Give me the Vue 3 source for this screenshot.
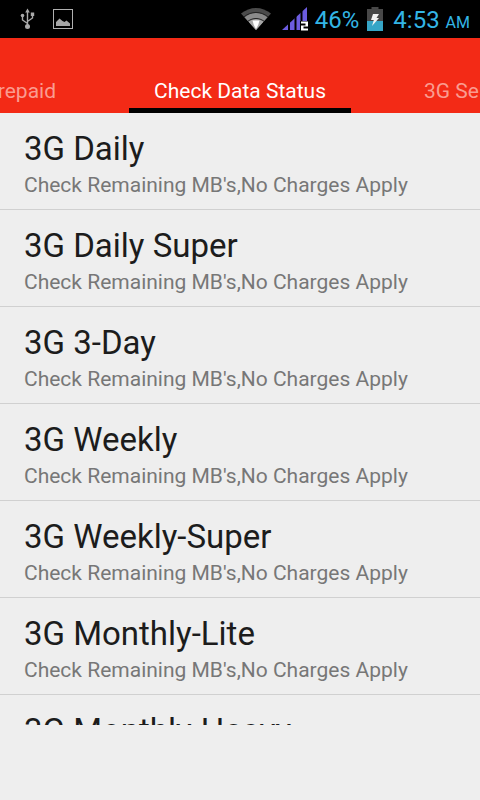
<script setup>
import { ref } from 'vue'

const plans = [
  '3G Daily',
  '3G Daily Super',
  '3G 3-Day',
  '3G Weekly',
  '3G Weekly-Super',
  '3G Monthly-Lite',
  '3G Monthly-Heavy'
]
const note = "Check Remaining MB's,No Charges Apply"
const tabs = ['Prepaid', 'Check Data Status', '3G Services']
const current = ref(1)
</script>

<template>
  <div class="screen">
    <header class="status">
      <div class="group notices">
        <svg class="usb" width="16" height="22" viewBox="0 0 16 22" aria-hidden="true">
          <g fill="none" stroke="#a9a9a9" stroke-width="1.4">
            <path d="M7.5 3v15M7.5 15.5L2.5 12V8M7.5 13.5l5-3.500V7" />
          </g>
          <g fill="#a9a9a9">
            <path d="M7.500 .5L9.800 4.500H5.200z" />
            <circle cx="7.500" cy="18.500" r="2.500" />
            <circle cx="2.500" cy="7.500" r="1.800" />
            <path d="M10.800 4.500h3.400v3.400h-3.400z" />
          </g>
        </svg>
        <svg width="20" height="20" viewBox="0 0 20 20" aria-hidden="true">
          <rect x=".5" y=".5" width="19" height="19" fill="none" stroke="#b0b0b0" />
          <path d="M3 17v-4l3.500-3.500L9.500 12l2 1 2-1.500 3.500 3V17z" fill="#a6a6a6" />
        </svg>
      </div>
      <div class="group system">
        <svg class="wifi" width="32" height="24" viewBox="0 0 32 24" aria-hidden="true">
          <path d="M16 23L1 6.500C10 -1 22 -1 31 6.500z" fill="#4b4b4b" />
          <path d="M16 23L4.500 10.300C11.500 4.500 20.500 4.500 27.500 10.300z" fill="#8a8a8a" />
          <path d="M16 23L8.500 14.600C13 11.300 19 11.300 23.500 14.600z" fill="#a8a8a8" />
          <g fill="none" stroke="#222" stroke-width="1">
            <path d="M4 9.800C11 4 21 4 28 9.800M8 14.200C13 10.600 19 10.600 24 14.200" />
          </g>
          <path d="M12.500 13.500h7l-1.300 4.500L16 22l-2.200-4z" fill="#fff" />
        </svg>
        <svg class="signal" width="27" height="24" viewBox="0 0 27 24" aria-hidden="true">
          <path d="M0 23L25 0v23z" fill="#6c5ce0" />
          <path d="M6 0h2v24H6zM12.500 0h2v24h-2zM18.500 0h2v24h-2z" fill="#000" />
          <path d="M18 14h8v10h-8z" fill="#000" />
          <path d="M19 14.500h7v5h-4.500v2H26v2h-7v-5h4.500v-2H19z" fill="#fff" />
        </svg>
        <span class="percent">46%</span>
        <svg class="battery" width="16" height="24" viewBox="0 0 16 24" aria-hidden="true">
          <path d="M4.500 0h7v2H16v22H0V2h4.500z" fill="#484848" />
          <path d="M0 14h16v10H0z" fill="#36a5c6" />
          <path d="M6 7h6l-2.500 4H12l-7 8 1.800-6H4z" fill="#f4f4f4" />
        </svg>
        <time class="clock">4:53 <small>AM</small></time>
      </div>
    </header>

    <nav class="tabs">
      <button
        v-for="(tab, i) in tabs"
        :key="tab"
        type="button"
        class="tab"
        :class="{ active: i === current }"
        @click="current = i"
      >{{ tab }}</button>
    </nav>

    <main class="list-area">
      <ul class="list">
        <li v-for="plan in plans" :key="plan">
          <a class="row" href="#">
            <span class="title">{{ plan }}</span>
            <span class="note">{{ note }}</span>
          </a>
        </li>
      </ul>
    </main>
    <footer class="spacer"></footer>
  </div>
</template>

<style>
body {
  background: #eeeeee;
}
</style>

<style scoped>
.screen {
  display: flex;
  flex-direction: column;
  height: 100vh;
  overflow: hidden;
  background: #eeeeee;
  font-family: Roboto, "Liberation Sans", sans-serif;
}
.status {
  display: flex;
  flex: none;
  justify-content: space-between;
  align-items: center;
  height: 38px;
  padding: 0 10px 0 20px;
  background: #000;
  color: #33b5e5;
}
.group {
  display: flex;
  align-items: center;
}
.notices {
  gap: 17px;
}
.system {
  white-space: nowrap;
}
.signal {
  margin-left: 10px;
}
.percent {
  margin-left: 6px;
  font-size: 24px;
  line-height: 24px;
  padding-top: 2px;
}
.battery {
  margin: 0 10px 0 8px;
}
.clock {
  font-size: 24px;
  line-height: 24px;
  padding-top: 2px;
}
.clock small {
  font-size: 16px;
  line-height: 16px;
}
.tabs {
  display: grid;
  flex: none;
  grid-template-columns: minmax(0, 1fr) auto minmax(0, 1fr);
  height: 75px;
  overflow: hidden;
  background: #f32a16;
}
.tab {
  display: flex;
  align-items: flex-end;
  justify-content: flex-start;
  min-width: 0;
  padding: 0 0 4px 73px;
  border: 0;
  border-bottom: 5px solid transparent;
  background: none;
  color: #fa9c90;
  font: inherit;
  font-size: 21px;
  line-height: 25px;
  white-space: nowrap;
  cursor: pointer;
}
.tab:first-child {
  justify-content: flex-end;
  padding: 0 73px 4px 0;
}
.tab.active {
  padding: 0 25px 4px;
  border-bottom-color: #000;
  color: #fff;
}
.list-area {
  flex: 1;
  min-height: 0;
  overflow: hidden;
}
.list {
  margin: 0;
  padding: 0;
  list-style: none;
}
.row {
  display: flex;
  flex-direction: column;
  gap: 2px;
  padding: 16px 24px 10px;
  border-bottom: 1px solid #d0d0d0;
  color: #1c1c1c;
  text-decoration: none;
}
.title {
  font-size: 33px;
  line-height: 40px;
}
.note {
  color: #777;
  font-size: 21px;
  line-height: 28px;
}
.spacer {
  flex: none;
  height: 75px;
}
</style>
